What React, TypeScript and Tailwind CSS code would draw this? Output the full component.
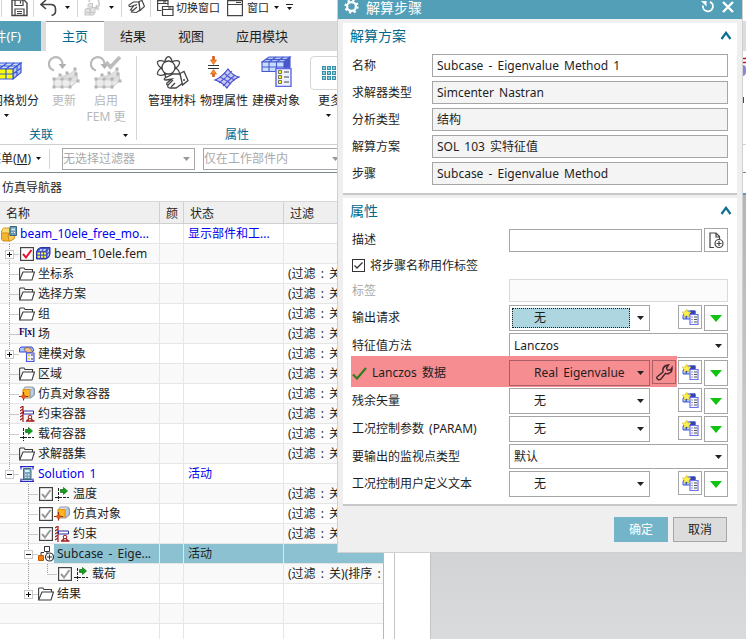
import React from "react";

type Kids = { children?: React.ReactNode };

function Caret({ color = "#222" }: { color?: string }) {
  return (
    <svg width="7" height="4" viewBox="0 0 7 4" className="shrink-0">
      <path d="M0 0h7L3.5 4z" fill={color} />
    </svg>
  );
}

function SmallCaret() {
  return (
    <svg width="5" height="3" viewBox="0 0 5 3" className="shrink-0">
      <path d="M0 0h5L2.5 3z" fill="#111" />
    </svg>
  );
}

/* ---------- quick access icons ---------- */

function SaveIcon() {
  return (
    <svg width="17" height="17" viewBox="0 0 17 17" fill="none" stroke="#444" strokeWidth="1.400">
      <path d="M1 0h12L16 3v12.500H1z" />
      <path d="M4 0v5.500h8V0M4 15.500v-6.500h9v6.500M6 11.500h5M6 13.500h5M9.500 1v2.500" strokeWidth="1.200" />
    </svg>
  );
}

function UndoIcon() {
  return (
    <svg width="17" height="17" viewBox="0 0 17 17" fill="none" stroke="#444" strokeWidth="1.600">
      <path d="M6 0L1 4.500 6 9M1 4.500h9.500q5 0 5 4.500v2.500q0 3-4 4" />
    </svg>
  );
}

function CubesFaded() {
  return (
    <svg width="17" height="17" viewBox="0 0 17 17" fill="none" stroke="#c8c8c8" strokeWidth="1.100">
      <path d="M1 10l1.500-1.500h4V13L5 15H1zM6 9l1.500-1.500h3.500V13L9 15H6z" fill="#e2e2e2" />
      <path d="M4 5l1.500-1.500h3V7H4zM1 12.500h9" fill="#e8e8e8" />
      <path d="M5 2a4.500 4 0 0 1 10 1 4.500 4 0 0 1-3 5M15 9.500L11.500 8 13 5" strokeWidth="1.500" />
    </svg>
  );
}

function TouchHand() {
  return (
    <svg width="17" height="14" viewBox="0 0 17 14" fill="none" stroke="#444" strokeWidth="1.200">
      <path d="M11 2H5.500L1 5q-.5 2 2 1.500L6 5.500 2.500 10l2 .5-1 1.500 5 .5L12 10z" fill="#fff" />
      <path d="M11 1.500l3-1 2.500 6-4.500 4z" fill="#fff" />
      <path d="M5 10.500L9 7M7 5.500l2-1" />
    </svg>
  );
}

function SwitchWindow() {
  return (
    <svg width="17" height="17" viewBox="0 0 17 17" fill="none" stroke="#444" strokeWidth="1.200">
      <path d="M4.500 10.500H.6V.6h10.400v5M.6 3.500H11M6 2h3" />
      <path d="M5.500 6.500h10.500v9H5.500z" fill="#fff" />
      <path d="M5.500 9.500h10.500M11 8h3.500" />
    </svg>
  );
}

function WindowIcon() {
  return (
    <svg width="16" height="17" viewBox="0 0 16 17" fill="none" stroke="#444" strokeWidth="1.200">
      <path d="M.6.6h14.800v15H.6zM.6 4.500h14.800M9 2.500h5" />
    </svg>
  );
}

/* ---------- ribbon icons ---------- */

function MeshBlock() {
  return (
    <svg width="30" height="18" viewBox="0 0 30 18" stroke="#3a56e0" strokeWidth="1.200">
      <path d="M0 7L8 1h21l-8 6z" fill="#d3dde8" />
      <path d="M21 7l8-6v9.500l-8 6.500z" fill="#b7c8df" />
      <path d="M0 7h21v10H0z" fill="#ffff00" />
      <path d="M0 12h21l8-6M7 17V7l8-6M14 17V7l8-6M25 14V4M4 4h21" fill="none" />
    </svg>
  );
}

function UpdateMesh({ check = false }: { check?: boolean }) {
  return (
    <svg width="32" height="33" viewBox="0 0 32 33" fill="none" stroke="#b9b9b9">
      <path d="M6 14.500A6.800 6.800 0 1 1 14.500 8" strokeWidth="2.200" />
      <path d="M10.500 8h8l-4 5z" fill="#b0b0b0" stroke="none" />
      <path d="M6 23h14l9-4v6l-6 6H6z" fill="#ececec" stroke="#d2d2d2" />
      <path d="M14 20q8-1 13-7l3 12-9 0-5-2z" fill="#e0e0e0" stroke="#dadada" />
      <path d="M6 23h17l6-4M6 31h16l8-6-3-12M6 23v8M14 23v8M22 23v8M14 20l-8 3M21 18l-7 5" stroke="#cfcfcf" />
      {[[6, 23], [14, 23], [22, 23], [6, 31], [14, 31], [22, 31], [30, 25], [28, 18], [27, 13], [12, 19], [19, 17]].map(([x, y]) => (
        <rect key={`${x}-${y}`} x={x - 1.5} y={y - 1.5} width="3" height="3" fill="#b4b4b4" stroke="none" />
      ))}
      {check && <path d="M16 6l4.500 5L30 1" strokeWidth="3.600" stroke="#bcbcbc" />}
    </svg>
  );
}

function MaterialIcon() {
  return (
    <svg width="33" height="33" viewBox="0 0 33 33" fill="none" stroke="#444" strokeWidth="1.300">
      <ellipse cx="12.500" cy="12" rx="4.500" ry="11.300" />
      <ellipse cx="12.500" cy="12" rx="4.500" ry="12.500" transform="rotate(60 12.500 12)" />
      <ellipse cx="12.500" cy="12" rx="4.500" ry="12.500" transform="rotate(-60 12.500 12)" />
      <circle cx="12.500" cy="11.500" r="6.500" fill="#fff" />
      <path d="M24 18h-7l-8 4q-2 2 1 2l6-1-5 4q-1 2 1 2-1 3 2 3h6l7-5z" fill="#fff" />
      <path d="M24 17.500l4-2 4 9-5.500 4.500z" fill="#fff" />
      <path d="M12 29l5-5M15 31l4-4M27 24h2" />
    </svg>
  );
}

function PhysicalIcon() {
  return (
    <svg width="32" height="33" viewBox="0 0 32 33">
      <path d="M0 9.500h11M0 12.500h11" stroke="#333" strokeWidth="1.200" />
      <path d="M5.500 0v5M5.500 21v-5" stroke="#e0561a" strokeWidth="2.600" />
      <path d="M2.500 4h6L5.500 8.500zM2.500 18h6L5.500 13.500z" fill="#f79419" stroke="#e0561a" strokeWidth=".7" />
      <path d="M7 24q7-3 13-11 5 7 11 8-7 3-12 11-5-6-12-8z" fill="#c3caf3" stroke="#4146cc" strokeWidth="1.200" />
      <path d="M11 27q7-5 13-12M15 30q6-6 12-11M12 21q6 3 11 7M16 17q5 5 11 7" fill="none" stroke="#5257d2" strokeWidth="1.100" />
    </svg>
  );
}

function ModelObjectIcon() {
  return (
    <svg width="31" height="31" viewBox="0 0 31 31" stroke="#4a56d0" strokeWidth="1.100">
      <path d="M1 6l7-5h21l-6 5z" fill="#a9cbf5" />
      <path d="M23 6l6-5v10l-6 5z" fill="#4a58c8" />
      <path d="M1 6h22v9.500H1z" fill="#c4dfff" />
      <path d="M1 11h22l6-5M8 15.500V6l7-5M15.500 15.500V6l7-5M5 3.500h21" fill="none" />
      <path d="M15 12.500h15v18H15z" fill="#eef1ff" stroke="#5f69e6" strokeWidth="1.400" />
      <path d="M17.500 14.500h3v3h-3zM17.500 19.500h3v3h-3zM17.500 24.500h3v3h-3z" fill="#ff0" stroke="#555" strokeWidth=".8" />
      <path d="M23 16h5M23 21h5M23 26h5" stroke="#444" />
    </svg>
  );
}

function MoreIcon() {
  return (
    <svg width="20" height="14" viewBox="0 0 20 14">
      {[0, 5, 10, 15].map((x) =>
        [0, 5, 10].map((y) => <rect key={`${x}-${y}`} x={x + 0.5} y={y + 0.5} width="3" height="3" fill="#89cbdc" stroke="#3c8fa8" />)
      )}
    </svg>
  );
}

/* ---------- tree icons ---------- */

function Folder() {
  return (
    <svg width="16" height="14" viewBox="0 0 16 14" fill="none" stroke="#3c3c3c" strokeWidth="1.100">
      <path d="M.6 13V1.500L1.500 1H5l1 1.500h7.500V5" />
      <path d="M.6 13L4 5h11.500L13 13z" fill="#fff" />
    </svg>
  );
}

function AssemblyIcon() {
  return (
    <svg width="16" height="16" viewBox="0 0 16 16">
      <path d="M.5 5l2-3h6v6h-8z" fill="#f7dc76" stroke="#d09a1c" />
      <path d="M.5 8l1-1h6v8H2l-1.500-2z" fill="#f2b632" stroke="#cf8a16" />
      <path d="M7 9h7l-1 4-5 2.500z" fill="#f9cf55" stroke="#cf8a16" />
      <path d="M9 .5h6.500v9H9z" fill="#6f9ab3" stroke="#3b6b84" />
      <path d="M10.500 2.500h3.500v2h-3.500z" fill="#c8eaf3" />
      <path d="M10.500 6h1v1h-1zM13 6h1v1h-1z" fill="#fff" />
    </svg>
  );
}

function FemIcon() {
  return (
    <svg width="15" height="13" viewBox="0 0 15 13">
      <path d="M.5 12V5Q1 1.500 4.500.5H14v6q-.5 4.500-4 5.500z" fill="#3f51c4" stroke="#2735a8" />
      <path d="M1.500 5.500H4v2H1.500zM5 5.500h2.200v2H5zM8 5.500h2v2H8zM1.500 8.800H4v2H1.500zM5 8.800h2.200v2H5zM8 8.800h2v2H8z" fill="#ffef35" />
      <path d="M4.500 2h2L5.500 4H3zM8 2h2.200L9 4H6.500zM11.500 4L13 2v2.500l-1.500 2zM11.500 8L13 6v2l-1.500 2z" fill="#c8d7f8" />
    </svg>
  );
}

function FieldIcon() {
  return <span className="-mt-px w-4 font-['Liberation_Serif',serif] text-[9.500px] font-bold leading-none tracking-[-0.300px] text-[#200060]">F[x]</span>;
}

function SmallModel() {
  return (
    <svg width="16" height="16" viewBox="0 0 16 16">
      <path d="M.5 2.500L2 1h11l2 3-1.500 2h-13z" fill="#a9c6f8" stroke="#3243e8" />
      <path d="M5 3q3-3 6-1l3 4-4 .5L7 6z" fill="#f0c38a" stroke="#704a3b" strokeWidth=".7" />
      <path d="M7.500 7h7.500v8.500H7.500z" fill="#eef" stroke="#4652ed" strokeWidth="1.200" />
      <path d="M9 8.500h2v1.500H9zM9 12h2v1.500H9z" fill="#e4d000" />
      <path d="M12 9h2M12 13h2" stroke="#333" />
    </svg>
  );
}

function SimObject() {
  return (
    <svg width="16" height="15" viewBox="0 0 16 15">
      <path d="M4 4l2-3h8l1.500 2v6L12 12H5z" fill="#d4dde5" stroke="#8e9ba8" />
      <path d="M4 3.500h7V11H4z" fill="#ffb51f" stroke="#e8920f" />
      <path d="M11.500 4L15 2v6.500l-3.500 2.500z" fill="#b9cfe8" stroke="#8096b6" strokeWidth=".6" />
      <path d="M0 10.500h9M4.500 6v8.500" stroke="#8f2c12" strokeWidth="1.200" />
      <circle cx="4.500" cy="10.500" r="2.200" fill="#e15a18" />
    </svg>
  );
}

function ConstraintIcon() {
  return (
    <svg width="15" height="16" viewBox="0 0 15 16" fill="none">
      <path d="M3 0v16M0 2l3-2M0 5l3-2M0 8l3-2M0 11l3-2M0 14l3-2" stroke="#a31b1b" strokeWidth="1.200" />
      <path d="M3.500 5h10v3h-10z" stroke="#2a2f9c" fill="#fff" />
      <circle cx="10" cy="11" r="1.800" stroke="#a31b1b" />
      <path d="M7 15l2-2.500M13 15l-2-2.500M6 15h8.500" stroke="#a31b1b" strokeWidth="1.300" />
    </svg>
  );
}

function LoadIcon() {
  return (
    <svg width="15" height="14" viewBox="0 0 15 14" fill="none">
      <path d="M3.500 1v13M0 10.500h14" stroke="#222" strokeDasharray="3 1" />
      <path d="M5.500 2.500h3V.5L12.500 4l-4 3.500v-2h-3z" fill="#149a1c" stroke="#076a0d" strokeWidth=".7" />
    </svg>
  );
}

function SolutionIcon() {
  return (
    <svg width="15" height="16" viewBox="0 0 15 16" fill="none">
      <path d="M0 .6h14M0 15.400h14M1 3.500V1M13 3.500V1M1 12.500V15M13 12.500V15" stroke="#2222c8" strokeWidth="1.100" />
      <path d="M3.500 2.500h7.500v10.500H3.500z" fill="#7fa6bb" stroke="#406c84" />
      <path d="M5 4h4.500v2H5z" fill="#d5f2f8" />
      <path d="M5 8h1.500v1.500H5zM8 8h1.500v1.500H8zM5 11h1.500v1H5zM8 11h1.500v1H8z" fill="#dde" />
      <path d="M1.500 13.500h11" stroke="#406c84" />
    </svg>
  );
}

function SubcaseIcon() {
  return (
    <svg width="16" height="17" viewBox="0 0 16 17" fill="none" stroke="#333">
      <path d="M6.500 1.500h5v5h-5zM9 6.500v3M3 10.500V7.500h3" />
      <path d="M.5 10.500h5v5h-5z" fill="#f57b13" stroke="#c55b05" />
      <circle cx="11.500" cy="12" r="4" fill="#fff" strokeWidth="1.200" />
      <path d="M11.500 9.500v5M9 12h5" />
    </svg>
  );
}

/* ---------- navigator tree ---------- */

type Row = {
  text: string;
  level: number;
  icon: React.ReactNode;
  box?: "+" | "-";
  check?: "red" | "gray";
  status?: string;
  filter?: string;
  blue?: boolean;
  selected?: boolean;
  last?: boolean;
};

const F = "(过滤 : 关";

const rows: Row[] = [
  { text: "beam_10ele_free_mo...", level: 0, icon: <AssemblyIcon />, status: "显示部件和工...", blue: true },
  { text: "beam_10ele.fem", level: 1, icon: <FemIcon />, box: "+", check: "red" },
  { text: "坐标系", level: 1, icon: <Folder />, filter: F },
  { text: "选择方案", level: 1, icon: <Folder />, filter: F },
  { text: "组", level: 1, icon: <Folder />, filter: F },
  { text: "场", level: 1, icon: <FieldIcon />, filter: F },
  { text: "建模对象", level: 1, icon: <SmallModel />, box: "+", filter: F },
  { text: "区域", level: 1, icon: <Folder />, filter: F },
  { text: "仿真对象容器", level: 1, icon: <SimObject />, filter: F },
  { text: "约束容器", level: 1, icon: <ConstraintIcon />, filter: F },
  { text: "载荷容器", level: 1, icon: <LoadIcon />, filter: F },
  { text: "求解器集", level: 1, icon: <Folder />, filter: F },
  { text: "Solution 1", level: 1, icon: <SolutionIcon />, box: "-", status: "活动", blue: true, last: true },
  { text: "温度", level: 2, icon: <LoadIcon />, check: "gray", filter: F },
  { text: "仿真对象", level: 2, icon: <SimObject />, check: "gray", filter: F },
  { text: "约束", level: 2, icon: <ConstraintIcon />, check: "gray", filter: F },
  { text: "Subcase - Eige...", level: 2, icon: <SubcaseIcon />, box: "-", status: "活动", selected: true },
  { text: "载荷", level: 3, icon: <LoadIcon />, check: "gray", filter: "(过滤 : 关)(排序 : 关)", last: true },
  { text: "结果", level: 2, icon: <Folder />, box: "+", last: true },
];

function Guide({ row }: { row: Row }) {
  const w = row.level === 0 ? 1 : row.level * 19;
  const x = w - 9.5;
  if (row.level === 0) return <span className="w-px shrink-0" />;
  return (
    <svg width={w} height="20" viewBox={`0 0 ${w} 20`} className="shrink-0" fill="none" stroke="#999" strokeDasharray="1 1">
      <path d={`M${x} 0V${row.last ? 10 : 20}M${x} 10.500H${w}`} />
      {row.level === 3 && <path d="M28.500 0V20" />}
      {row.box && (
        <g strokeDasharray="none">
          <rect x={x - 4} y="6.500" width="8" height="8" fill="#fff" stroke="#c8c8c8" />
          <path d={row.box === "+" ? `M${x - 2.5} 10.500h5M${x} 8v5` : `M${x - 2.5} 10.500h5`} stroke="#111" />
        </g>
      )}
    </svg>
  );
}

function TreeCheck({ kind }: { kind: "red" | "gray" }) {
  return (
    <svg width="14" height="14" viewBox="0 0 14 14" className="ml-px mr-px shrink-0" fill="none">
      <rect x=".6" y=".6" width="12.800" height="12.800" fill="#fff" stroke="#444" strokeWidth="1.200" />
      <path d="M3 7l3 3.500L11.500 3" stroke={kind === "red" ? "#e8112d" : "#999"} strokeWidth="2" />
    </svg>
  );
}

function TreeRow({ row, index }: { row?: Row; index: number }) {
  const bg = index % 2 ? "bg-[#f9f9f9]" : "bg-white";
  const sel = row?.selected ? "bg-[#8cc1d1]" : "";
  const color = row?.blue ? "text-[#0000f0]" : "text-[#1e1e1e]";
  return (
    <div className={`flex h-5 shrink-0 border-b border-[#e6e6e6] leading-[19px] ${bg} ${color}`}>
      <div className="flex w-[160px] shrink-0 items-center overflow-hidden border-r border-[#e6e6e6]">
        {row && (
          <>
            <Guide row={row} />
            {row.check && <TreeCheck kind={row.check} />}
            <span className="flex w-4 shrink-0 items-center justify-center">{row.icon}</span>
            <span className={`h-[19px] grow pl-[3px] ${sel}`}>{row.text}</span>
          </>
        )}
      </div>
      <div className={`w-6 shrink-0 border-r border-[#e6e6e6] ${sel}`} />
      <div className={`w-[100px] shrink-0 overflow-hidden border-r border-[#e6e6e6] pl-1 ${sel}`}>{row?.status}</div>
      <div className={`w-[99px] shrink-0 overflow-hidden pl-1 ${sel}`}>{row?.filter}</div>
    </div>
  );
}

/* ---------- dialog pieces ---------- */

function Collapse() {
  return (
    <svg width="12" height="9" viewBox="0 0 12 9" fill="none" stroke="#0d6f8f" strokeWidth="2.200">
      <path d="M1.500 8L6 1.800 10.500 8" />
    </svg>
  );
}

function SectionTitle({ children }: Kids) {
  return (
    <div className="flex h-[26px] items-center justify-between pb-[2px] pl-[7px] pr-[5px] text-[14px] text-[#00698c]">
      <span>{children}</span>
      <Collapse />
    </div>
  );
}

function InfoRow({ label, value, white }: { label: string; value: string; white?: boolean }) {
  return (
    <div className="flex h-[23px] items-center">
      <span className="w-[80px] shrink-0">{label}</span>
      <div className={`flex h-[23px] w-[296px] items-center border border-[#a6a6a6] pl-1 ${white ? "bg-white" : "bg-[#f4f4f4]"}`}>{value}</div>
    </div>
  );
}

function CreateIcon() {
  return (
    <svg width="17" height="16" viewBox="0 0 17 16">
      <path d="M1 6.500L4 2h9v8H1z" fill="#a9cdf7" stroke="#3f55d5" />
      <path d="M1 7h9M4 10V7l2-3" stroke="#3f55d5" />
      <path d="M8 1.500h5.500v4H8z" fill="#3444b8" />
      <path d="M8 5.500h8v10H8z" fill="#f4f5ff" stroke="#6a72f0" strokeWidth="1.200" />
      <path d="M9.500 8h1M9.500 10.500h1M9.500 13h1M12 8h3M12 10.500h3M12 13h3" stroke="#555" />
      <path d="M4.500 0l1.300 2.800 3.200.3L6.800 5.200l.7 3-3-1.500-3 1.500.8-3L0 3.100l3.200-.3z" fill="#fff04a" stroke="#c9bc45" strokeWidth=".5" />
    </svg>
  );
}

function CreateButtons() {
  return (
    <div className="ml-auto flex items-start gap-[2px]">
      <div className="flex size-6 items-center justify-center border border-[#a6a6a6] bg-white">
        <CreateIcon />
      </div>
      <div className="flex h-[26px] w-6 items-center justify-center border border-[#a6a6a6] bg-white">
        <svg width="12" height="7" viewBox="0 0 12 7">
          <path d="M0 0h12L6 7z" fill="#12c312" />
        </svg>
      </div>
    </div>
  );
}

function Combo({ value, wide, plain, focus }: { value: string; wide?: boolean; plain?: boolean; focus?: boolean }) {
  const size = wide ? "h-[25px] w-[219px]" : "h-[26px] w-[141px]";
  return (
    <div className={`flex shrink-0 items-center justify-between border pr-[5px] ${size} ${plain ? "border-[#a86064]" : "border-[#a6a6a6] bg-white"}`}>
      <span
        className={
          focus
            ? "ml-[2px] flex h-[20px] w-[118px] items-center border border-dotted border-[#222] bg-[#add6e0] pl-[21px]"
            : wide
              ? "pl-1"
              : "pl-6"
        }
      >
        {value}
      </span>
      <Caret />
    </div>
  );
}

function ComboRow({ label, children }: { label: React.ReactNode; children: React.ReactNode }) {
  return (
    <div className="flex items-start">
      <span className="flex h-[26px] w-[157px] shrink-0 items-center">{label}</span>
      {children}
    </div>
  );
}

function StepDialog() {
  return (
    <div className="absolute left-[337px] top-0 flex h-[553px] w-[406px] flex-col border-b border-l border-r border-[#d0d0d0] bg-[#efefef]">
      <div className="flex h-[19px] shrink-0 items-start bg-[#539fb8] pl-[6px] text-[14px] leading-[16px] text-white">
        <svg width="15" height="15" viewBox="0 0 15 15" fill="none" stroke="#fff" className="-mt-px">
          <circle cx="7.500" cy="7.500" r="4.400" strokeWidth="2.200" />
          <circle cx="7.500" cy="7.500" r="6.100" strokeWidth="2" strokeDasharray="2.300 2.490" />
        </svg>
        <span className="ml-[7px]">解算步骤</span>
        <svg width="14" height="13" viewBox="0 0 14 13" fill="none" stroke="#fff" strokeWidth="1.900" className="ml-auto">
          <path d="M9 1.800A5 5 0 1 1 2 5.500" />
          <path d="M0 1h5.500v5.500z" fill="#fff" stroke="none" />
        </svg>
        <svg width="12" height="12" viewBox="0 0 12 12" stroke="#fff" strokeWidth="2.400" className="ml-[7px] mr-[8px] mt-px">
          <path d="M1 1l10 10M11 1L1 11" />
        </svg>
      </div>

      <div className="mx-[5px] mt-1 h-[172px] shrink-0 border-b-2 border-[#c8c8c8] bg-white">
        <SectionTitle>解算方案</SectionTitle>
        <div className="mt-[5px] flex flex-col gap-1 pl-[9px]">
          <InfoRow label="名称" value="Subcase - Eigenvalue Method 1" white />
          <InfoRow label="求解器类型" value="Simcenter Nastran" />
          <InfoRow label="分析类型" value="结构" />
          <InfoRow label="解算方案" value="SOL 103 实特征值" />
          <InfoRow label="步骤" value="Subcase - Eigenvalue Method" />
        </div>
      </div>

      <div className="mx-[5px] mt-[3px] h-[308px] shrink-0 border-b-2 border-[#c8c8c8] bg-white">
        <SectionTitle>属性</SectionTitle>
        <div className="flex flex-col pl-[9px] pr-[9px] pt-1">
          <div className="flex h-6 items-end">
            <span className="w-[157px] shrink-0 self-center">描述</span>
            <div className="h-[23px] w-[193px] border border-[#a6a6a6]" />
            <div className="ml-auto flex size-6 items-center justify-center border border-[#a6a6a6]">
              <svg width="15" height="17" viewBox="0 0 15 17" fill="none" stroke="#444" strokeWidth="1.200">
                <path d="M5 15.500H1V1h6l3.500 3.500V7M7 1v4h3.500" />
                <circle cx="10" cy="11.500" r="4" fill="#fff" />
                <path d="M10 9v5M7.500 11.500h5" />
              </svg>
            </div>
          </div>
          <div className="mt-[7px] flex h-[13px] items-center">
            <svg width="13" height="13" viewBox="0 0 13 13" fill="none" stroke="#333">
              <rect x=".5" y=".5" width="12" height="12" />
              <path d="M2.500 6.500L5 9l5.500-5.500" strokeWidth="1.300" />
            </svg>
            <span className="ml-[5px]">将步骤名称用作标签</span>
          </div>
          <div className="mt-[7px] flex h-[23px] items-center">
            <span className="w-[157px] shrink-0 text-[#a8a8a8]">标签</span>
            <div className="h-[23px] w-[219px] border border-[#dadada] bg-[#fbfbfb]" />
          </div>
          <div className="mt-[3px] flex flex-col gap-[2px]">
            <ComboRow label="输出请求">
              <Combo value="无" focus />
              <CreateButtons />
            </ComboRow>
            <div className="h-[25px]">
              <ComboRow label="特征值方法">
                <Combo value="Lanczos" wide />
              </ComboRow>
            </div>
            <div className="-mb-px -ml-px -mt-1 flex items-start pt-1">
              <div className="-mb-1 -mt-[4px] flex h-[31px] w-[326px] shrink-0 items-start bg-[#f68d91] pl-px pt-1">
                <span className="flex h-[26px] w-[157px] shrink-0 items-center">
                  <svg width="15" height="13" viewBox="0 0 15 13" fill="none" stroke="#2f7d1d" strokeWidth="2.200">
                    <path d="M1 7.500l4 4L14 1" />
                  </svg>
                  <span className="ml-[5px]">Lanczos 数据</span>
                </span>
                <Combo value="Real Eigenvalue" plain />
                <div className="ml-[2px] flex size-6 items-center justify-center border border-[#a86064]">
                  <svg width="17" height="17" viewBox="0 0 17 17" fill="none" stroke="#40262a" strokeWidth="1.400">
                    <path d="M1.500 12.500L7 8Q6 3.500 10 1.500l2.500-.5-2 3 1 2h3l1.500-2.500q.5 5-3.500 6-1.500.5-3-.2L5 15q-2 1.500-3.500 0t0-2.500z" />
                  </svg>
                </div>
              </div>
              <CreateButtons />
            </div>
            <div className="mt-px">
              <ComboRow label="残余矢量">
                <Combo value="无" />
                <CreateButtons />
              </ComboRow>
            </div>
            <ComboRow label="工况控制参数 (PARAM)">
              <Combo value="无" />
              <CreateButtons />
            </ComboRow>
            <div className="h-[25px]">
              <ComboRow label="要输出的监视点类型">
                <Combo value="默认" wide />
              </ComboRow>
            </div>
            <ComboRow label="工况控制用户定义文本">
              <Combo value="无" />
              <CreateButtons />
            </ComboRow>
          </div>
        </div>
      </div>

      <div className="mt-[11px] flex justify-end gap-[5px] pr-[15px]">
        <button className="h-[25px] w-[54px] bg-[#73b4c8] text-white">确定</button>
        <button className="h-[25px] w-[54px] border border-[#a6a6a6] bg-[#dcdcdc]">取消</button>
      </div>
    </div>
  );
}

function Tool({ icon, label, width, faded }: { icon: React.ReactNode; label: React.ReactNode; width: string; faded?: boolean }) {
  return (
    <div className={`flex shrink-0 flex-col items-center ${width} ${faded ? "text-[#b8b8b8]" : ""}`}>
      <div className="flex h-[37px] items-start justify-center">{icon}</div>
      <div className="text-center leading-4 [word-spacing:0px]">{label}</div>
    </div>
  );
}

export default function App() {
  return (
    <div className="relative flex h-[639px] w-[746px] flex-col overflow-hidden whitespace-nowrap bg-white font-['Noto_Sans','Noto_Sans_CJK_SC',sans-serif] text-[12px] text-[#1e1e1e] [word-spacing:2px]">
      {/* quick access bar */}
      <div className="flex h-[21px] shrink-0 items-start">
        <div className="ml-px h-[17px] w-px bg-[#d5d5d5]" />
        <div className="ml-[9px]"><SaveIcon /></div>
        <div className="ml-[5px] h-[17px] w-px bg-[#d5d5d5]" />
        <div className="ml-[6px]"><UndoIcon /></div>
        <div className="ml-[8px] mt-[6px]"><SmallCaret /></div>
        <div className="ml-[7px] h-[17px] w-px bg-[#d5d5d5]" />
        <div className="ml-[6px]"><CubesFaded /></div>
        <div className="ml-[8px] mt-[6px]"><SmallCaret /></div>
        <div className="ml-[7px] h-[17px] w-px bg-[#d5d5d5]" />
        <div className="ml-[6px]"><TouchHand /></div>
        <div className="ml-[5px] h-[17px] w-px bg-[#d5d5d5]" />
        <div className="ml-[6px]"><SwitchWindow /></div>
        <span className="ml-[2px] text-[11px] leading-[16px]">切换窗口</span>
        <div className="ml-[7px]"><WindowIcon /></div>
        <span className="ml-[4px] text-[11px] leading-[16px]">窗口</span>
        <div className="ml-[5px] mt-[6px]"><SmallCaret /></div>
        <div className="ml-[7px] mt-[4px] flex w-[7px] justify-center border-t border-[#222] pt-[2px]"><SmallCaret /></div>
      </div>

      {/* tab strip */}
      <div className="flex h-[30px] shrink-0 items-stretch bg-[#dcdcdc] text-[13px] leading-[30px]">
        <div className="flex w-[41px] justify-end overflow-hidden bg-[#539fb8] pr-5 text-white">文件(F)</div>
        <div className="w-[5px]" />
        <div className="w-[58px] border-t border-[#8a8a8a] bg-white text-center leading-[29px] text-[#00698c]">主页</div>
        <div className="w-[58px] text-center">结果</div>
        <div className="w-[58px] text-center">视图</div>
        <div className="w-[84px] text-center">应用模块</div>
      </div>

      {/* ribbon */}
      <div className="flex h-[94px] shrink-0 border-b border-[#d0d0d0] pt-[5px]">
        <div className="flex w-[136px] flex-col">
          <div className="flex h-[69px]">
            <div className="flex w-[43px] shrink-0 flex-col">
              <div className="-ml-[8px] flex h-[37px] items-start pt-[6px]"><MeshBlock /></div>
              <div className="flex justify-end pr-[4px] leading-4">网格划分</div>
              <div className="ml-[4px] mt-[5px]"><SmallCaret /></div>
            </div>
            <Tool width="w-[42px]" faded icon={<UpdateMesh />} label="更新" />
            <Tool width="w-[42px]" faded icon={<UpdateMesh check />} label={<>启用<br />FEM 更</>} />
          </div>
          <div className="flex items-center pl-[29px] pt-px text-[#00698c]">
            <span>关联</span>
            <span className="ml-auto mr-[8px]"><SmallCaret /></span>
          </div>
        </div>
        <div className="h-[84px] w-px bg-[#d5d5d5]" />
        <div className="flex flex-col">
          <div className="flex h-[69px] pl-[9px]">
            <Tool width="w-[52px]" icon={<MaterialIcon />} label="管理材料" />
            <Tool width="w-[52px]" icon={<PhysicalIcon />} label="物理属性" />
            <Tool width="w-[52px]" icon={<ModelObjectIcon />} label="建模对象" />
            <div className="ml-[7px] flex w-[42px] flex-col">
              <div className="ml-[1px] flex h-[34px] w-[42px] items-center rounded border border-[#d5d5d5] pl-[11px]"><MoreIcon /></div>
              <div className="mt-[3px] pl-[9px] leading-4">更多</div>
              <div className="ml-[17px] mt-[5px]"><SmallCaret /></div>
            </div>
          </div>
          <div className="pl-[88px] pt-px text-[#00698c]">属性</div>
        </div>
        <svg width="3" height="60" viewBox="0 0 3 60" className="ml-auto">
          <path d="M0 2.500h3M0 6.500h3" stroke="#c4141c" strokeWidth="1.500" />
          <path d="M0 9q3 0 3 4v3q0 3-3 4z" fill="#8a86d8" />
          <path d="M.5 41v6" stroke="#1f4f9c" />
        </svg>
      </div>

      {/* selection filter bar */}
      <div className="flex h-[28px] shrink-0 items-center border-b border-[#7d878b]">
        <div className="flex w-[31px] justify-end overflow-hidden"><span>菜单(<u>M</u>)</span></div>
        <div className="ml-[5px]"><SmallCaret /></div>
        <div className="ml-[8px] h-5 w-px bg-[#d5d5d5]" />
        <div className="ml-[12px] flex h-[22px] w-[133px] items-center justify-between border border-[#a6a6a6] pr-1 text-[#aaa]">
          <span>无选择过滤器</span><Caret color="#999" />
        </div>
        <div className="ml-[8px] flex h-[22px] w-[143px] items-center justify-between border border-[#a6a6a6] pr-[6px] text-[#aaa]">
          <span>仅在工作部件内</span><Caret color="#999" />
        </div>
      </div>

      {/* work area */}
      <div className="flex grow">
        <div className="flex w-[384px] shrink-0 flex-col overflow-hidden border-r border-[#b8b8b8]">
          <div className="h-[29px] shrink-0 border-b border-[#d8d8d8] pl-[2px] leading-[30px]">仿真导航器</div>
          <div className="flex h-[22px] shrink-0 border-b border-[#d0d0d0] bg-[#efefef] leading-[23px]">
            <div className="w-[160px] border-r border-[#d0d0d0] pl-[6px]">名称</div>
            <div className="w-6 border-r border-[#d0d0d0] pl-[6px]">颜</div>
            <div className="w-[100px] border-r border-[#d0d0d0] pl-[6px]">状态</div>
            <div className="pl-[6px]">过滤</div>
          </div>
          {rows.map((row, i) => (
            <TreeRow key={i} row={row} index={i} />
          ))}
          <TreeRow index={19} />
          <TreeRow index={20} />
        </div>
        <div className="w-[11px] shrink-0 border-r border-[#c4c4c4] bg-white" />
        <div className="w-[36px] shrink-0 border-r border-[#c4c4c4] bg-white" />
        <div className="mt-5 grow border-t-2 border-[#539fb8] bg-gradient-to-b from-[#b4b5b7] to-[#dadbdd]" />
      </div>

      <StepDialog />
    </div>
  );
}
